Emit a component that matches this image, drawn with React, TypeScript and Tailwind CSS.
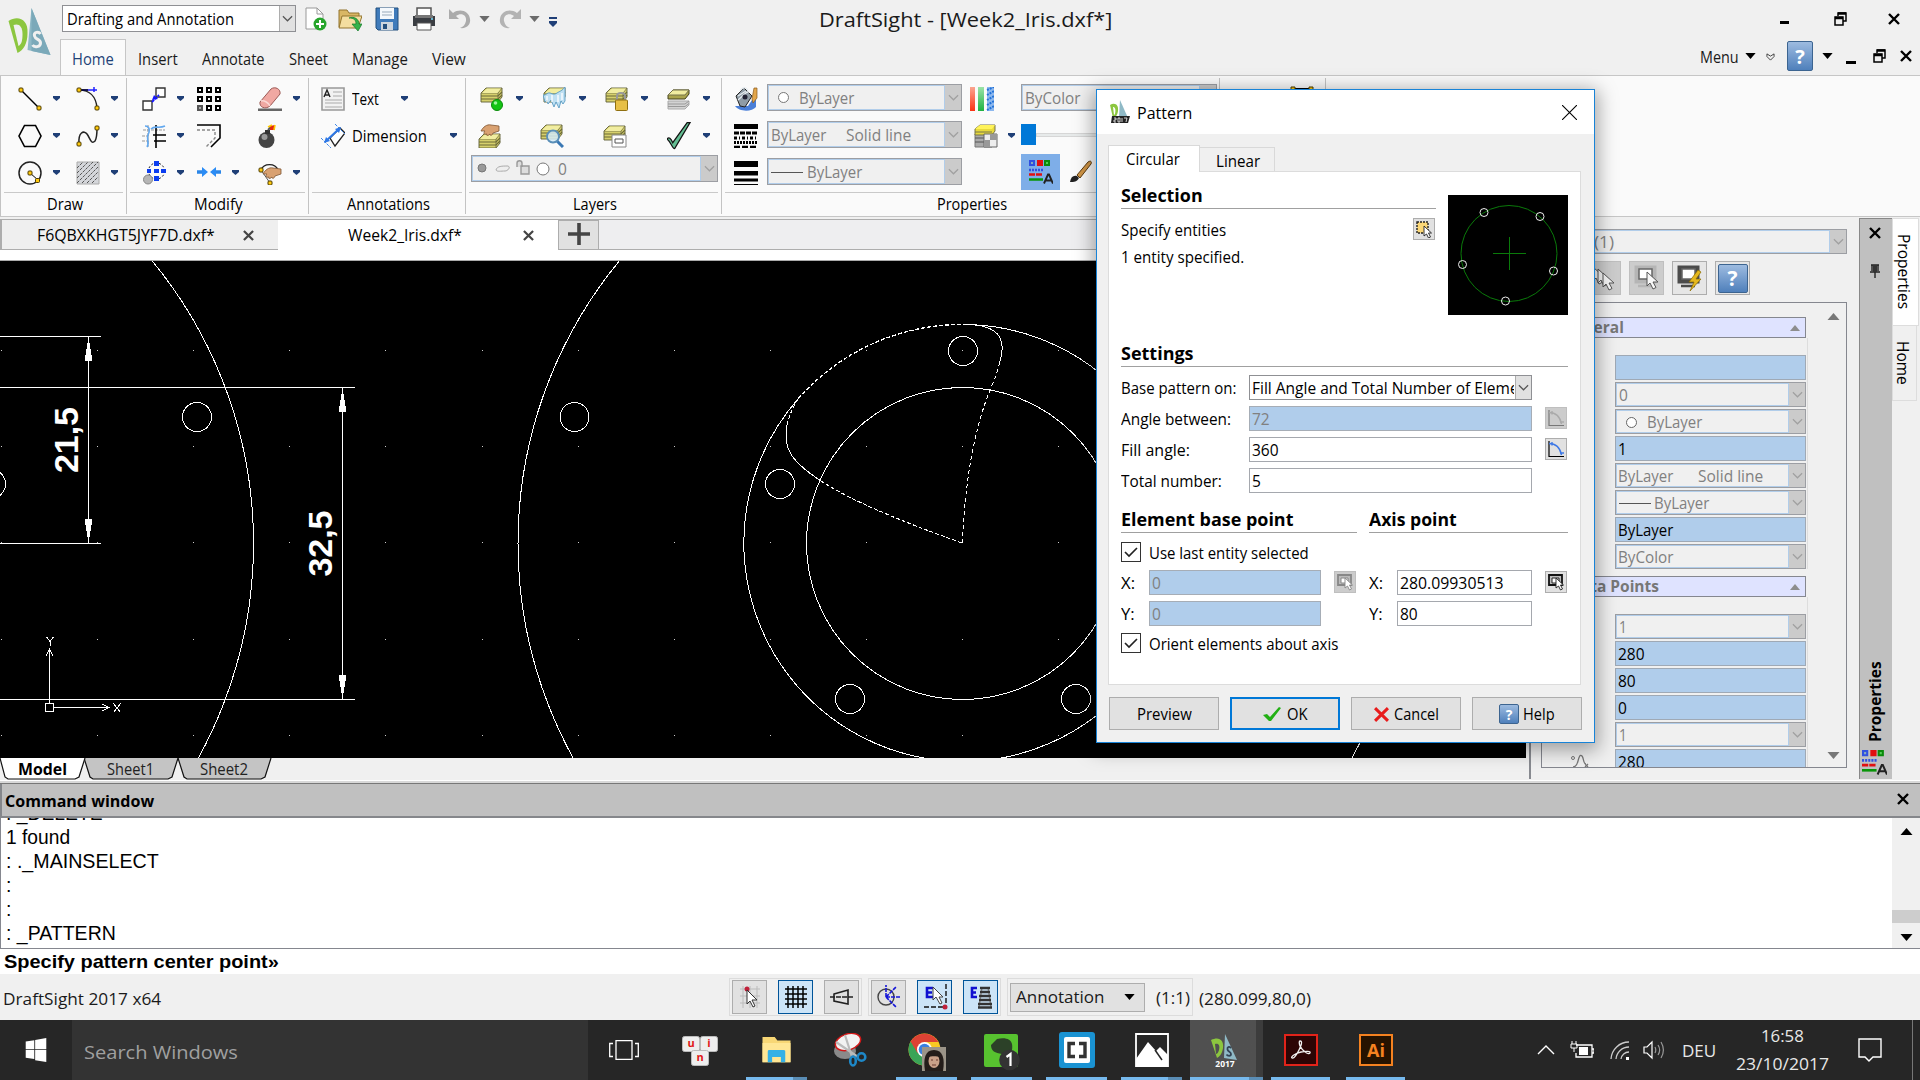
import React, { useLayoutEffect, useRef, useState } from "react";

type P = { children?: React.ReactNode; className?: string };

/* Text squeezed or stretched horizontally to fill the width of its box. */
function Fit({ children, className = "" }: P) {
  const box = useRef<HTMLSpanElement>(null);
  const inner = useRef<HTMLSpanElement>(null);
  const [scale, setScale] = useState(1);
  useLayoutEffect(() => {
    if (box.current && inner.current) setScale(box.current.offsetWidth / inner.current.offsetWidth);
  }, []);
  return (
    <span ref={box} className={"block shrink-0 whitespace-pre text-left " + className}>
      <span ref={inner} className="inline-block origin-left" style={{ transform: `scaleX(${scale})` }}>
        {children}
      </span>
    </span>
  );
}

function Ic({ children, className = "w-6 h-6", box = "0 0 24 24" }: P & { box?: string }) {
  return (
    <svg viewBox={box} className={"shrink-0 " + className} fill="none">
      {children}
    </svg>
  );
}

const Arrow = ({ className = "" }: P) => (
  <Ic box="0 0 7 5" className={"w-[7px] h-[5px] " + className}>
    <path d="M0 0h7v2L3.5 5 0 2z" fill="#1f3f77" />
  </Ic>
);
const Tri = ({ className = "w-[11px] h-[6px]" }: P) => (
  <Ic box="0 0 12 7" className={className}>
    <path d="M0 0h12L6 7z" fill="currentColor" />
  </Ic>
);
const Chev = () => (
  <Ic box="0 0 12 7" className="w-[11px] h-[7px]">
    <path d="M1 1l5 5 5-5" stroke="currentColor" strokeWidth="1.3" />
  </Ic>
);
const X = ({ className = "" }: P) => (
  <Ic box="0 0 12 12" className={"w-3 h-3 " + className}>
    <path d="M1 1l10 10M11 1L1 11" stroke="currentColor" strokeWidth="2.4" />
  </Ic>
);
const Dot = ({ x, y }: { x: number; y: number }) => (
  <rect x={x - 2} y={y - 2} width="4" height="4" rx="1" fill="#ffc90e" stroke="#4a3a00" />
);

function Combo({ children, className = "", on = false }: P & { on?: boolean }) {
  return (
    <div className={"flex shrink-0 border " + (on ? "border-[#8f9094] bg-white text-black " : "border-[#9c9ea3] bg-[#f0f0f0] text-[#808080] ") + className}>
      <div className={"flex min-w-0 flex-1 items-center overflow-hidden border pt-[2px] " + (on ? "border-transparent" : "border-[#b1cdea]")}>{children}</div>
      <div className={"flex w-[16px] shrink-0 items-center justify-center " + (on ? "border-l border-[#adadad] bg-[#e1e1e1] text-[#555]" : "bg-[#cbcbcb] text-[#a0a0a0]")}>
        <Chev />
      </div>
    </div>
  );
}

const HelpIcon = ({ className = "" }: P) => (
  <span className={"flex shrink-0 items-center justify-center rounded-[2px] border border-[#3c6490] bg-linear-to-b from-[#9dbbe0] to-[#4f80bb] font-bold text-white " + className}>?</span>
);

/* ---------- ribbon drawings ---------- */
const Stack = ({ y = 0, c = "#d6d06c" }: { y?: number; c?: string }) => (
  <g transform={`translate(0 ${y})`}>
    <path d="M1 5l5-5h16v9l-4 5H1z" fill={c} stroke="#5f5d35" strokeWidth=".9" />
    <path d="M1 5h17v9M18 5l4-5" stroke="#77744a" strokeWidth=".9" />
    <path d="M1 8h17l4-4M1 11h17l4-4" stroke="#6b6936" strokeWidth="1.1" />
    <path d="M2 5l5-4.500h14L17.500 5z" fill="#f1eda0" />
  </g>
);
const Hand = ({ x = 0, y = 0 }) => (
  <path transform={`translate(${x} ${y})`} d="M0 8c2-4 6-7 10-6l8 1v5l-6 2c-1 3-3 3-3 1-2 2-4 2-3 0-3 1-4-1-2-3z" fill="#d9a171" stroke="#7d5634" strokeWidth=".8" />
);
const ic = {
  line: <Ic><path d="M3 3l18 18" stroke="#000" strokeWidth="1.4" /><Dot x={3} y={3} /><Dot x={21} y={21} /></Ic>,
  arc: <Ic><path d="M3 3c10 0 17 6 18 18" stroke="#222" strokeWidth="1.4" /><path d="M3 3h18M18 0v5" stroke="#2020ff" strokeWidth="1.5" /><path d="M3 3h9" stroke="#000" strokeWidth="1.4" /><Dot x={3} y={3} /><Dot x={21} y={21} /></Ic>,
  hex: <Ic><path d="M6.500 1.500h11L23 12l-5.500 10.500h-11L1 12z" stroke="#000" strokeWidth="1.6" /></Ic>,
  spline: <Ic><path d="M3 20C2 8 8 6 11 10s4 11 8 7c2-3 2-8 2-13" stroke="#222" strokeWidth="1.5" /><Dot x={3} y={20} /><Dot x={21} y={4} /></Ic>,
  circle: <Ic><circle cx="12" cy="12" r="11" stroke="#222" strokeWidth="1.5" /><path d="M12 12l8 7" stroke="#000" /><Dot x={12} y={12} /><Dot x={19.500} y={19.500} /></Ic>,
  hatch: <Ic><path d="M1 1h22v22H1z" fill="#d4d6da" stroke="#aaa" /><path d="M1 7l6-6M1 12L12 1M1 17L17 1M1 22L22 1M6 22L22 6M11 22l11-11M16 22l6-6" stroke="#555" strokeDasharray="3 1" /></Ic>,
  copy: <Ic><path d="M14 1h9v9h-9z M1 14h9v9H1z" stroke="#333" strokeWidth="1.4" fill="#fff" /><path d="M10 15l7-7" stroke="#1515ff" strokeWidth="1.800" strokeDasharray="3 1" /><path d="M10 13l2-5 4 4z" fill="#1515ff" /></Ic>,
  grid: <Ic>{[1, 10, 19].map((y) => [1, 10, 19].map((x) => <rect key={x + "-" + y} x={x} y={y} width="4" height="4" stroke={x === 1 && y === 19 ? "#555" : "#000"} strokeWidth="2" fill={x === 1 && y === 19 ? "#aaa" : "#fff"} />))}</Ic>,
  eraser: <Ic><path d="M0 21.500h24v2.500H0z" fill="#666" /><path d="M2 15L13 2c4-3 10 0 9 5L12 19c-5 4-11 1-10-4z" fill="#f0a8a2" stroke="#9b5a56" /><path d="M3 14c3-1 8 2 9 5" stroke="#fbd8d4" strokeWidth="1.500" /></Ic>,
  trim: <Ic><path d="M1 6h22M0 12h8M0 17h8M6 1v22" stroke="#999" strokeDasharray="3 1" /><path d="M14 1v23M11 11h13M12 17h12" stroke="#000" strokeWidth="1.6" /><path d="M3 2c5 0 5 5 3 9s2 8-1 12M9 5c4-4 7 0 14-3" stroke="#62a8ef" strokeWidth="1.6" /></Ic>,
  offset: <Ic><path d="M0 1h23v13l-9 9" stroke="#000" strokeWidth="1.6" /><path d="M0 6h18v8l-9 9" stroke="#888" strokeWidth="1.4" strokeDasharray="3 2" /></Ic>,
  bomb: <Ic><circle cx="8.500" cy="16" r="8" fill="#444" /><circle cx="6.500" cy="13" r="3" fill="#999" /><path d="M7 6h5v4H7z" fill="#333" /><path d="M10 6l3-3" stroke="#555" strokeWidth="2" /><path d="M12 2l5-1v5h-5z" fill="#e02a10" /><path d="M10 3l4-2M16 6l1-5" stroke="#ffc800" strokeWidth="1.600" /></Ic>,
  polar: <Ic><circle cx="14.500" cy="10" r="8" stroke="#111" strokeDasharray="2 2" /><path d="M12 0h5v5h-5zM5 8h4v4H5zM12 8h5v4h-5zM19 8h5v4h-5zM12 15h5v5h-5z" fill="#0b3df0" /><circle cx="6" cy="18.500" r="4.500" fill="#b5b5b5" stroke="#888" /></Ic>,
  join: <Ic><path d="M0 11h6M24 11h-6" stroke="#2b86e8" strokeWidth="3.500" /><path d="M5 6l6 5-6 5zM19 6l-6 5 6 5z" fill="#2b8cf5" /></Ic>,
  edit: <Ic><path d="M3 9a9 8 0 0 1 17 0" stroke="#222" strokeWidth="1.4" /><path d="M3 9l9 13" stroke="#555" /><Hand x={5} y={5} /><Dot x={3} y={9} /><Dot x={12} y={22} /></Ic>,
  text: <Ic><path d="M1 1h22v22H1z" stroke="#999" strokeWidth="1.600" fill="#f2f2f2" /><path d="M3 10L6 3l3 7M4 8h4" stroke="#222" strokeWidth="1.4" /><path d="M12 5h9M12 9h9M4 13h17M4 16h17M4 20h17" stroke="#aaa" /></Ic>,
  dim: <Ic><path d="M9 14L19 4l5 5-10 13z" fill="#fff" stroke="#222" strokeWidth="1.300" /><path d="M0 14l10 10M14 0l10 10" stroke="#3f87e8" strokeDasharray="3 1" /><path d="M5 17L19 4" stroke="#2e78e6" strokeWidth="2" /><path d="M3 19l2-6 4 4zM20 3l-6 2 4 4z" fill="#2e78e6" /></Ic>,
  lOn: <Ic><Stack y={1} /><circle cx="17" cy="18" r="5.500" fill="#14c414" stroke="#0a8a0a" /><circle cx="15.500" cy="16" r="1.800" fill="#9cf59c" /></Ic>,
  lFreeze: <Ic><Stack y={1} /><path d="M0 8c3 1 4-3 7-2s4 2 7 0 5-2 8-6v14l-2 3-2-3-2 7-3-6-2 5-3-7-3 4-1-4-2 2z" fill="#bfe0f2" stroke="#5a9cc4" strokeWidth=".9" /><path d="M4 9v6M9 8v7M15 8v7M19 6v7" stroke="#fff" strokeWidth="1.300" /></Ic>,
  lLock: <Ic><Stack y={1} /><path d="M12 13V9c0-4 8-4 8 0v4" stroke="#999" strokeWidth="2" /><rect x="10.500" y="13" width="12" height="10.500" rx="1" fill="#e7bf45" stroke="#8f6f10" /></Ic>,
  lIso: <Ic><path d="M1 22v-8h21v4l-4 4z" fill="#d3d3d3" stroke="#aaa" /><path d="M1 17h17l4-3M1 19.500h17l4-3" stroke="#999" /><path d="M1 8l5-5h16v4l-4 5H1z" fill="#aaa44c" stroke="#44421e" /><path d="M1 8h17l4-5H6z" fill="#f1eda0" stroke="#77744a" /></Ic>,
  lHand: <Ic><Stack y={10} /><Hand x={3} y={-1} /></Ic>,
  lFind: <Ic><Stack y={1} /><path d="M17 17l6 6" stroke="#3a78b4" strokeWidth="3" /><circle cx="13" cy="12.500" r="6" fill="#d5ebf7" fillOpacity=".85" stroke="#5a8fb8" strokeWidth="1.800" /></Ic>,
  lState: <Ic><Stack y={2} /><path d="M9 11h14v12H9z" fill="#fff" stroke="#888" /><path d="M12 15h8v4h-8z" stroke="#555" /></Ic>,
  check: <Ic className="w-[24px] h-[30px]" box="1 0 25 30"><path d="M1 18c2-2 4-1 6 4L22 1h3L9 28c-2 1-4-7-8-10z" fill="#63bd92" stroke="#111" strokeWidth="1.300" /></Ic>,
  paint: <Ic><path d="M1 19c4 6 17 6 21 1V7l-8 12z" fill="#4a7fd8" /><path d="M2 9l8-8 8 8-7 11-5-1z" fill="#8f9ca6" stroke="#222" /><path d="M6 4c3-5 8-4 8 2M4 9l8-5M4 13l9-8" stroke="#e6ecf0" strokeWidth="1.300" /><circle cx="11" cy="10" r="2.500" fill="#223" /><path d="M20 1h3v10l-4 5-1-4z" fill="#e3a64a" stroke="#8a5a1a" strokeWidth=".7" /></Ic>,
  ltype: <Ic><path d="M0 0h24v5H0z" fill="#000" /><path d="M0 9h24" stroke="#000" strokeWidth="3" strokeDasharray="5 1" /><path d="M0 14h24" stroke="#000" strokeWidth="3" strokeDasharray="3 2 1 2" /><path d="M0 18.500h24" stroke="#000" strokeWidth="3" strokeDasharray="2 1" /><path d="M0 23h24" stroke="#000" strokeWidth="2.500" strokeDasharray="6 2" /></Ic>,
  lweight: <Ic><path d="M0 0h24v6H0zM0 10h24v4.500H0zM0 17.500h24v3H0zM0 23h24v1H0z" fill="#000" /></Ic>,
};

const Cell = ({ children, arrow = true, gap = "gap-[11px]" }: P & { arrow?: boolean; gap?: string }) => (
  <div className={"flex h-[37px] items-center " + gap}>{children}{arrow && <Arrow />}</div>
);

function Panel({ title, tw, className = "", children }: P & { title: string; tw: string }) {
  return (
    <div className={"flex shrink-0 flex-col pt-[4px] " + className}>
      <div className="h-[112px]">{children}</div>
      <div className="mx-[3px] flex h-[23px] justify-center border-t border-[#c9c9c9] pl-[2px]">
        <Fit className={"leading-[22px] " + tw}>{title}</Fit>
      </div>
    </div>
  );
}
const Sep = () => <div className="mt-[2px] h-[136px] w-px shrink-0 bg-[#c3c3c3]" />;

const StyleGlyph = ({ className = "w-6 h-6" }: P) => (
  <Ic className={className}>
    <path d="M1 1h4v4H1z" fill="#8ab" stroke="#3050e0" strokeWidth="2" /><path d="M8 0h6v6H8z" fill="#e01010" /><path d="M16 1h4v4h-4z" fill="#5c5" stroke="#0a8a0a" strokeWidth="2" />
    <path d="M0 10h14" stroke="#3050e0" strokeWidth="2.500" strokeDasharray="2 1" /><path d="M0 14.500h14" stroke="#e01010" strokeWidth="2.500" strokeDasharray="6 1" /><path d="M0 19.500h14" stroke="#089508" strokeWidth="2.500" />
    <path d="M15 23.500l4-9h1l4 9M16.500 20.500h6" stroke="#222" strokeWidth="1.900" />
  </Ic>
);

function TitleBar() {
  const tabs: [string, string][] = [["Insert", "w-[40px] ml-[12px]"], ["Annotate", "w-[63px] ml-[24px]"], ["Sheet", "w-[39px] ml-[24px]"], ["Manage", "w-[56px] ml-[24px]"], ["View", "w-[34px] ml-[24px]"]];
  return (
    <header className="flex h-[75px] shrink-0 bg-[#f0f0f0]">
      <Ic box="0 0 42 50" className="ml-[8px] mt-[8px] h-[50px] w-[43px]">
        <path d="M23 0l19 47-23-5z" fill="#8fb9c6" /><path d="M23 0v43l19 4z" fill="#7ba9b9" />
        <path d="M0 13c9-6 20-2 19 12 0 11-4 17-10 20z" fill="#8cc63f" /><path d="M5 17c5-2 9 1 9 9 0 7-1 10-4 12z" fill="#f0f0f0" />
        <path d="M32 26c-2-3-7-2-6 2s6 3 6 7-6 5-8 2" stroke="#f0f0f0" strokeWidth="3" />
      </Ic>
      <div className="flex w-[1640px] shrink-0 flex-col pl-[9px]">
        <div className="flex h-[40px] items-start pl-[2px]">
          <Combo on className="mt-[5px] h-[27px] w-[234px]"><Fit className="ml-[3px] w-[167px]">Drafting and Annotation</Fit></Combo>
          <div className="ml-[9px] mt-[7px] flex h-[24px] items-center text-[#6b6b6b]">
            <Ic box="0 0 22 24" className="h-[24px] w-[22px]"><path d="M1 1h11l6 6v15H1z" fill="#fff" stroke="#999" /><path d="M12 1v6h6" stroke="#999" /><circle cx="15" cy="17" r="6.500" fill="#27a52c" /><path d="M15 13v8M11 17h8" stroke="#fff" strokeWidth="2" /></Ic>
            <Ic className="ml-[11px] h-6 w-6"><path d="M1 3h8l2 3h10v14H1z" fill="#d9b765" stroke="#93752f" /><path d="M4 9h20l-4 12H1z" fill="#f4dea0" stroke="#93752f" /><path d="M11 11c5 0 7 2 7 6h-4l6 7 4-7h-3c0-5-5-8-10-6z" fill="#35b24a" stroke="#167a28" strokeWidth=".7" /></Ic>
            <Ic className="ml-[13px] h-6 w-6"><path d="M1 1h22v22H3l-2-2z" fill="#3f7bbb" stroke="#23507f" /><path d="M5 1h14v11H5z" fill="#f4f8fc" /><path d="M7 5h10M7 8h10" stroke="#9ab" /><path d="M6 15h12v8H6z" fill="#cdd6df" /><path d="M8 17h4v5H8z" fill="#234f7e" /></Ic>
            <Ic className="ml-[13px] h-6 w-6"><path d="M5 1h14v8H5z" fill="#fff" stroke="#555" strokeWidth="1.500" /><path d="M1 9h22v10H1z" fill="#3a3d42" /><path d="M3 8h18v3H3z" fill="#777" /><path d="M5 16h14v7H5z" fill="#fff" stroke="#555" /><circle cx="20" cy="12" r="1" fill="#7df" /></Ic>
            <Ic className="ml-[12px] h-6 w-6"><path d="M1 2v10h10L8 9c5-4 11-1 10 5-1 4-3 6-6 7 7 1 11-4 10-9C21 4 12 1 5 6z" fill="#ababab" /></Ic>
            <Tri className="ml-[7px] h-[6px] w-[11px]" />
            <Ic className="ml-[9px] h-6 w-6"><path d="M22 2v10H12l3-3C10 5 4 8 5 14c1 4 3 6 6 7C4 22 0 17 1 12 2 4 11 1 18 6z" fill="#b3b3b3" /></Ic>
            <Tri className="ml-[6px] h-[6px] w-[11px]" />
            <Ic box="0 0 8 10" className="ml-[9px] mt-[5px] h-[10px] w-[8px]"><path d="M0 0h8v2H0zM0 4h8v2L4 10 0 6z" fill="#1f3f77" /></Ic>
          </div>
          <Fit className="ml-[262px] mt-[5px] w-[294px] text-[20px] leading-[30px] text-[#1a1a1a]">DraftSight - [Week2_Iris.dxf*]</Fit>
        </div>
        <div className="flex h-[36px] text-[#1a1a1a]">
          <div className="relative z-10 flex h-[36px] w-[66px] justify-center border border-b-0 border-[#c6c6c6] bg-[#fafafa]"><Fit className="w-[42px] leading-[38px] text-[#1f4277]">Home</Fit></div>
          {tabs.map(([t, c]) => <Fit key={t} className={"leading-[40px] " + c}>{t}</Fit>)}
          <Fit className="ml-auto mr-[-48px] w-[39px] leading-[37px]">Menu</Fit>
        </div>
      </div>
      <div className="flex flex-1 flex-col text-black">
        <div className="flex h-[38px] justify-end pr-[20px]">
          <div className="mt-[21px] h-[3px] w-[9px] bg-black" />
          <Restore className="ml-[45px] mt-[12px]" />
          <X className="ml-[41px] mt-[13px]" />
        </div>
        <div className="flex h-[37px] items-center justify-end pr-[8px] pb-[1px]">
          <Tri />
          <Ic box="0 0 10 9" className="ml-[10px] mt-[2px] h-[8px] w-[9px]"><path d="M1 4V1l4 2.500L9 1v3L5 8z" stroke="#333" /></Ic>
          <HelpIcon className="ml-[12px] h-[30px] w-[26px] text-[20px]" />
          <Tri className="ml-[9px] h-[6px] w-[11px]" />
          <div className="ml-[13px] mt-[13px] h-[3px] w-[10px] bg-black" />
          <Restore className="ml-[17px]" />
          <X className="ml-[14px]" />
        </div>
      </div>
    </header>
  );
}
const Restore = ({ className = "" }: P) => (
  <Ic box="0 0 13 14" className={"h-[14px] w-[13px] " + className}><path d="M4 4V1h8v8H9" stroke="#000" strokeWidth="1.500" /><path d="M4 1.500h8M1 6h8" stroke="#000" strokeWidth="2.500" /><path d="M1 5h8v8H1z" stroke="#000" strokeWidth="1.500" /></Ic>
);

function Ribbon() {
  return (
    <div className="flex h-[142px] shrink-0 border-y border-[#c6c6c6] bg-[#fafafa]">
      <Panel title="Draw" tw="w-[36px]" className="w-[126px] border-l border-[#c3c3c3]">
        <div className="grid grid-cols-[58px_auto] pl-[17px]">
          {[ic.line, ic.arc, ic.hex, ic.spline, ic.circle, ic.hatch].map((e, i) => <Cell key={i}>{e}</Cell>)}
        </div>
      </Panel>
      <Sep />
      <Panel title="Modify" tw="w-[49px]" className="w-[181px]">
        <div className="grid grid-cols-[55px_61px_auto] pl-[15px]">
          {[ic.copy, ic.grid, ic.eraser, ic.trim, ic.offset, ic.bomb, ic.polar, ic.join, ic.edit].map((e, i) => <Cell key={i} arrow={![1, 4, 5].includes(i)}>{e}</Cell>)}
        </div>
      </Panel>
      <Sep />
      <Panel title="Annotations" tw="w-[83px]" className="w-[156px]">
        <div className="flex flex-col pl-[12px]">
          <Cell gap="gap-0">{ic.text}<Fit className="ml-[7px] mr-[22px] mt-[2px] w-[27px]">Text</Fit></Cell>
          <Cell gap="gap-0">{ic.dim}<Fit className="ml-[7px] mr-[23px] mt-[2px] w-[75px]">Dimension</Fit></Cell>
        </div>
      </Panel>
      <Sep />
      <Panel title="Layers" tw="w-[44px]" className="w-[255px]">
        <div className="grid grid-cols-[63px_62px_62px_auto] pl-[14px]">
          {[ic.lOn, ic.lFreeze, ic.lLock, ic.lIso].map((e, i) => <Cell key={i} gap="gap-[12px]">{e}</Cell>)}
        </div>
        <div className="grid grid-cols-[62px_63px_64px_auto] pl-[12px]">
          {[ic.lHand, ic.lFind, ic.lState, ic.check].map((e, i) => <Cell key={i} arrow={i === 3} gap="gap-[12px]">{e}</Cell>)}
        </div>
        <Combo className="ml-[5px] mt-px h-[27px] w-[247px]">
          <Ic box="0 0 100 24" className="-mt-[2px] h-6 w-[100px]">
            <circle cx="9" cy="11" r="4" fill="#999" stroke="#777" /><path d="M23 13c1-4 6-4 12-4 3 1 0 5-3 5-4 0-8 1-9-1z" stroke="#aaa" fill="#eee" />
            <path d="M44 10V6c0-3 5-3 5 0v4M48 9h8v8h-8z" stroke="#999" strokeWidth="1.400" fill="#ddd" /><circle cx="70" cy="12" r="6" fill="#fff" stroke="#777" />
          </Ic>
          <Fit className="ml-[-15px] w-[9px]">0</Fit>
        </Combo>
      </Panel>
      <Sep />
      <Panel title="Properties" tw="w-[70px]" className="w-[497px]">
        <div className="flex">
          <div className="ml-[12px] flex w-[33px] flex-col">
            <Cell arrow={false}>{ic.paint}</Cell><Cell arrow={false}>{ic.ltype}</Cell><Cell arrow={false}>{ic.lweight}</Cell>
          </div>
          <div className="flex w-[203px] flex-col gap-[10px] pt-[4px]">
            <Combo className="h-[27px] w-[195px]"><span className="-mt-[3px] ml-[9px] mr-[10px] h-[11px] w-[11px] rounded-full border border-[#777] bg-white" /><Fit className="w-[55px]">ByLayer</Fit></Combo>
            <Combo className="h-[27px] w-[195px]"><Fit className="ml-[2px] w-[55px]">ByLayer</Fit><Fit className="ml-[20px] w-[65px]">Solid line</Fit></Combo>
            <Combo className="h-[27px] w-[195px]"><span className="ml-[2px] mr-[4px] h-px w-[32px] bg-[#555]" /><Fit className="w-[55px]">ByLayer</Fit></Combo>
          </div>
          <div className="flex w-[51px] flex-col">
            <Cell arrow={false}><Ic><path d="M0 0h5v24H0z" fill="url(#cr)" /><path d="M8 0h6v24H8z" fill="url(#cg)" /><path d="M17 0h7v24h-7z" fill="#8db8ee" /><path d="M17 3l7-3M17 8l7-4M17 13l7-4M17 18l7-4M17 23l7-4" stroke="#2272d8" strokeWidth="2" strokeDasharray="2 1" />
              <defs><linearGradient id="cr" x2="0" y2="1"><stop stopColor="#fba590" /><stop offset="1" stopColor="#fa3214" /></linearGradient><linearGradient id="cg" x2="0" y2="1"><stop stopColor="#9be3a8" /><stop offset="1" stopColor="#1fb242" /></linearGradient></defs></Ic></Cell>
            <Cell gap="gap-[10px]"><Ic className="ml-[4px] h-6 w-6"><path d="M1 10h17v13H1z" fill="#aaa" stroke="#777" /><path d="M1 14h10M1 18h10" stroke="#555" /><path d="M1 5l5-4h15v6l-3 4H1z" fill="#e8da3c" stroke="#77744a" /><path d="M1 5h17l3-4H6z" fill="#fff35a" /><path d="M1 8h17" stroke="#77744a" /><path d="M10 10h13v13H10z" fill="#eee" stroke="#666" /><path d="M16 10h7v6h-7zM10 16h6v7h-6z" fill="#999" /></Ic></Cell>
          </div>
          <div className="flex flex-col">
            <Combo className="mt-[4px] h-[27px] w-[196px]"><Fit className="ml-[2px] w-[55px]">ByColor</Fit></Combo>
            <div className="mt-[13px] flex h-[21px] items-center"><span className="h-[21px] w-[15px] bg-[#0078d7]" /><span className="h-[4px] w-[180px] border border-[#d6d6d6] bg-[#e7eaea]" /></div>
            <div className="mt-[9px] flex h-[36px] items-center gap-[10px]"><span className="flex h-[36px] w-[39px] items-center justify-center bg-[#7eaee8]"><StyleGlyph /></span>
              <Ic box="0 0 22 24" className="h-6 w-[22px]"><path d="M0 22c1-5 3-7 7-6l2 2c-2 4-5 4-9 4z" fill="#222" /><path d="M7 15L18 2c3-2 4 0 3 2L10 18z" fill="#cf9445" stroke="#5a3a10" /></Ic></div>
          </div>
        </div>
      </Panel>
      <Sep />
      <div className="flex w-[105px] flex-col pt-[10px]">
        <Ic box="0 0 24 4" className="ml-[70px] h-[4px] w-[24px]"><path d="M2 3h20" stroke="#000" strokeWidth="2" /><path d="M1 1h4v3H1zM19 1h4v3h-4z" fill="#ffc90e" stroke="#4a3a00" /></Ic>
      </div>
      <Sep />
    </div>
  );
}

function DocTabs() {
  return (
    <div className="flex h-[31px] w-[1526px] shrink-0 border-t border-[#adadad] bg-[#eeeef0] text-black">
      <div className="flex w-[278px] items-center border-b border-l-2 border-[#adadad] bg-[#efefef] pt-[2px]">
        <Fit className="ml-[35px] w-[178px]">F6QBXKHGT5JYF7D.dxf*</Fit><X className="ml-[28px] h-[11px] w-[11px] text-[#444]" />
      </div>
      <div className="flex w-[280px] items-center bg-white"><Fit className="ml-[70px] w-[114px]">Week2_Iris.dxf*</Fit><X className="ml-[61px] h-[11px] w-[11px] text-[#444]" /></div>
      <div className="flex w-[41px] items-center justify-center border border-[#adadad] bg-[#e1e1e1]"><Ic className="-mt-[2px] h-6 w-6"><path d="M12 1v22M1 12h22" stroke="#444" strokeWidth="3.600" /></Ic></div>
      <div className="flex-1 border-b border-[#adadad]" />
    </div>
  );
}

/* ---------- drawing area ---------- */
const gridXs = Array.from({ length: 16 }, (_, i) => Math.floor(1.5 + i * 96.1));
const gridYs = [350, 446, 542, 639, 735];
const holes = [[197, 417], [-9, 484], [574.5, 417], [963, 351], [780, 484], [850, 699], [1076, 699]];

function Drawing() {
  return (
    <svg viewBox="0 261 1526 497" className="h-[497px] w-[1526px] shrink-0 bg-black" fill="none" stroke="#fff" shapeRendering="crispEdges">
      {gridYs.map((y) => gridXs.map((x) => <rect key={x + "-" + y} x={x} y={y} width="1" height="1" fill="#ccc" stroke="none" />))}
      <circle cx="-191" cy="543.5" r="444.500" /><circle cx="962.5" cy="543.5" r="444.500" />
      <circle cx="962.5" cy="543.5" r="156" />
      <path d="M967 324.500A218.500 218.500 0 1 1 798 399" />
      <path d="M967 324.500A218.500 218.500 0 0 0 798 399" strokeDasharray="4 2" strokeWidth="1.300" />
      {holes.map(([x, y]) => <circle key={x} cx={x} cy={y} r="14.500" />)}
      <path d="M962.500 543.500Q966 450 990 390Q997 374 999.500 363" strokeDasharray="4 3" />
      <path d="M999.500 363C1006 343 1003 325 967 324.500M787 425C783 447 789 460 821 481" />
      <path d="M798 399Q790 412 787 425M821 481C850 500 900 521 962 543" strokeDasharray="4 2" />
      <path d="M0 336.500h101M0 543.500h101M88.500 337v206M0 387.500h355M0 699.500h355M342.500 388v311" />
      <path d="M88.500 337l4 24h-8zM88.500 543l4-24h-8zM342.500 388l4 24h-8zM342.500 699l4-24h-8z" fill="#fff" stroke="none" />
      <path d="M45.500 703.500h8v8h-8zM49.500 703v-55M46 656l3.500-7 3.500 7M54 707.500h55M102 704l7 3.500-7 3.500" />
      <path d="M46.500 637l3.500 4.500 3.500-4.500M50 641v5M113.500 703.500l7 9M120.500 703.500l-7 9" />
      <g fill="#fff" stroke="none" className="font-['Liberation_Sans',sans-serif] text-[34px] font-bold">
        <text transform="translate(77.500 473) rotate(-90)" textLength="66">21,5</text>
        <text transform="translate(331.500 576.500) rotate(-90)" textLength="66">32,5</text>
      </g>
    </svg>
  );
}

function SheetTabs() {
  return (
    <div className="flex h-[22px] w-[1526px] shrink-0 bg-[#f0f0f0]">
      <svg viewBox="0 0 272 22" className="h-[22px] w-[272px]" stroke="#111" strokeWidth="1.200">
        <path d="M178 0l6 19 3 2h74l4-2 6-19" fill="#c4c4c4" /><path d="M84 0l6 19 3 2h75l4-2 6-19" fill="#c4c4c4" /><path d="M0 0l5 19 3 2h67l4-2 6-19" fill="#fff" />
        <g fill="#000" stroke="none" className="text-[15.5px]">
          <text x="18" y="16.500" textLength="49" lengthAdjust="spacingAndGlyphs" fontWeight="bold">Model</text>
          <text x="107" y="16.500" textLength="47" lengthAdjust="spacingAndGlyphs" fill="#222">Sheet1</text>
          <text x="200" y="16.500" textLength="48" lengthAdjust="spacingAndGlyphs" fill="#222">Sheet2</text>
        </g>
      </svg>
    </div>
  );
}

/* ---------- properties palette ---------- */
const Blue = ({ children }: P) => <div className="h-[25px] w-[191px] shrink-0 border border-[#9fa9b5] bg-[#b0cdeb] pl-[2px] leading-[24px] text-black">{children}</div>;
const Drop = ({ children }: P) => <Combo className="h-[25px] w-[191px]">{children}</Combo>;
const ToolBtn = ({ children, on = false }: P & { on?: boolean }) => (
  <div className={"flex h-[34px] w-[35px] shrink-0 items-center justify-center border " + (on ? "border-[#adadad] bg-[#e6e6e6]" : "border-[#bfbfbf] bg-[#cccccc]")}>{children}</div>
);
const GroupHead = ({ children }: P) => (
  <div className="flex h-[21px] w-[252px] items-center justify-between border border-[#85878f] bg-[#dfe3ff] pl-[8px] pr-[5px] font-bold text-[#777]">
    {children}<Ic box="0 0 10 6" className="h-[6px] w-[10px]"><path d="M0 6l5-6 5 6z" fill="#8d8d8d" /></Ic>
  </div>
);
const Monitor = ({ c = "#8a8a8a" }: { c?: string }) => <><path d="M3 3h19v15H3z" fill={c} stroke={c} strokeWidth="3" /><path d="M6 5h13v10H6z" fill="#fff" stroke="#666" strokeWidth="1.500" /><path d="M5 22h14" stroke={c} strokeWidth="2.500" /></>;
const Cursor = ({ t = "" }) => <path transform={t} d="M0 0v14l3-3 3 6 3-1.500-3-5.500h5z" fill="#f7f7f7" stroke="#555" />;

function Palette() {
  return (
    <aside className="flex h-[562px] flex-1 pt-px">
      <div className="ml-[3px] w-[12px] border-l-2 border-[#888a90]" />
      <div className="flex w-[306px] flex-col pt-[11px]">
        <Combo className="h-[25px] w-[306px]"><Fit className="ml-[51px] w-[20px]">(1)</Fit></Combo>
        <div className="flex gap-[8px] pt-[7px] pl-[45px]">
          <ToolBtn><Ic className="h-7 w-7" box="0 0 28 28"><Cursor t="translate(3 3)" /><Cursor t="translate(8 5)" /><Cursor t="translate(13 9)" /></Ic></ToolBtn>
          <ToolBtn><Ic className="h-7 w-7" box="0 0 28 28"><Monitor c="#b5b5b5" /><Cursor t="translate(14 8)" /></Ic></ToolBtn>
          <ToolBtn on><Ic className="h-7 w-7" box="0 0 28 28"><Monitor c="#4b4b4b" /><path d="M22 6l-9 12h5l-4 9 11-12h-5l5-7z" fill="#e5b81e" stroke="#8a6a00" strokeWidth=".7" /></Ic></ToolBtn>
          <ToolBtn on><HelpIcon className="h-[29px] w-[30px] text-[21px]" /></ToolBtn>
        </div>
        <div className="mt-[7px] flex h-[466px] overflow-hidden border border-[#85878f]">
          <div className="flex w-[265px] shrink-0 flex-col pl-[12px] pt-[14px]">
            <GroupHead>General</GroupHead>
            <div className="flex flex-col items-end gap-[2px] border-r border-[#ddd] pt-[17px] -mr-px pr-px">
              <Blue />
              <Drop><Fit className="ml-[2px] w-[9px]">0</Fit></Drop>
              <Drop><span className="ml-[9px] mr-[10px] h-[11px] w-[11px] rounded-full border border-[#666] bg-white" /><Fit className="w-[55px]">ByLayer</Fit></Drop>
              <Blue>1</Blue>
              <Drop><Fit className="ml-[1px] w-[55px]">ByLayer</Fit><Fit className="ml-[25px] w-[65px]">Solid line</Fit></Drop>
              <Drop><span className="ml-[2px] mr-[3px] h-px w-[32px] bg-[#555]" /><Fit className="w-[55px]">ByLayer</Fit></Drop>
              <Blue><Fit className="w-[55px]">ByLayer</Fit></Blue>
              <Drop><Fit className="ml-[1px] w-[55px]">ByColor</Fit></Drop>
            </div>
            <div className="mt-[7px]"><GroupHead><span className="ml-auto mr-[131px]">Data Points</span></GroupHead></div>
            <div className="flex flex-col items-end gap-[2px] border-r border-[#ddd] pt-[17px] -mr-px pr-px">
              <Drop><Fit className="ml-[2px] w-[8px]">1</Fit></Drop>
              <Blue><Fit className="w-[27px]">280</Fit></Blue><Blue><Fit className="w-[18px]">80</Fit></Blue><Blue>0</Blue>
              <Drop><Fit className="ml-[2px] w-[8px]">1</Fit></Drop>
              <div className="flex gap-[26px]"><Ic box="0 0 18 14" className="mt-[4px] h-[14px] w-[18px]"><circle cx="2" cy="5" r="1.500" stroke="#777" /><path d="M2 14c3 0 4-2 5-6s2-7 4-5 1 8 4 8M14 11l3 3M17 11l-3 3" stroke="#777" strokeWidth="1.300" /></Ic><Blue><Fit className="w-[27px]">280</Fit></Blue></div>
            </div>
          </div>
          <div className="flex flex-1 flex-col items-center justify-between pb-[8px] pl-[13px] pt-[10px] text-[#777]"><Tri className="w-[13px] h-[7px] rotate-180" /><Tri className="w-[13px] h-[7px]" /></div>
        </div>
      </div>
      <div className="ml-[12px] flex w-[33px] flex-col items-center border-l border-t border-[#888] bg-[#c0c0c0] pr-[3px] pt-[8px]">
        <X className="h-[12px]" />
        <Ic box="0 0 10 14" className="mt-[25px] h-[14px] w-[10px]"><path d="M1 1h8M2 1v6M8 1v6M0 8h10M5 8v6" stroke="#222" strokeWidth="1.400" /><path d="M3 1h4v7H3z" fill="#333" /></Ic>
        <div className="mt-auto flex h-[86px] items-start [writing-mode:vertical-rl] rotate-180"><Fit className="w-auto text-[15.5px] font-bold leading-[20px] text-black">Properties</Fit></div>
        <StyleGlyph className="mb-[4px] mt-[8px] h-[25px] w-[25px]" />
      </div>
      <div className="flex w-[27px] flex-col text-black">
        <div className="h-[108px] w-[27px] border border-[#ddd] bg-white pr-[3px] pt-[15px] leading-[22px] [writing-mode:vertical-rl]">Properties</div>
        <div className="h-[75px] w-[25px] border border-t-0 border-[#ddd] pr-[3px] pt-[15px] leading-[20px] [writing-mode:vertical-rl]">Home</div>
      </div>
    </aside>
  );
}

/* ---------- pattern dialog ---------- */
const H = ({ children, w, className = "" }: P & { w: string }) => (
  <div className={"flex h-[24px] shrink-0 items-start border-b border-[#a0a0a0] " + className}><Fit className={"text-[17px] font-bold leading-[22px] " + w}>{children}</Fit></div>
);
const Field = ({ children, off = false, className = "", w = "w-[27px]" }: P & { off?: boolean; w?: string }) => (
  <div className={"flex h-[25px] shrink-0 items-center border pl-[2px] pt-[2px] " + (off ? "border-[#a6adb6] bg-[#b0cdeb] text-[#808080] " : "border-[#a5a8ae] bg-white text-black ") + className}><Fit className={w}>{children}</Fit></div>
);
const Mini = ({ children, off = false, className = "" }: P & { off?: boolean }) => (
  <div className={"flex h-[22px] w-[22px] shrink-0 items-center justify-center border " + (off ? "border-[#bfbfbf] bg-[#cccccc] " : "border-[#adadad] bg-[#e1e1e1] ") + className}>{children}</div>
);
const AngleIcon = ({ off = false }) => (
  <Ic box="0 0 18 18" className="h-[18px] w-[18px]"><path d="M2 1v15.500h15" stroke={off ? "#777" : "#000"} strokeWidth="1.200" /><path d="M2 3.500c7 0 11 4 12.500 11.500M5 2v3.500M13 13h4" stroke={off ? "#aaa" : "#3d78e6"} strokeWidth="1.400" /></Ic>
);
const PickIcon = ({ off = false }) => (
  <Ic box="0 0 18 18" className="h-[18px] w-[18px]"><path d="M2 2h13v10H2z" stroke={off ? "#888" : "#111"} strokeWidth="1.800" fill="#bbb" /><path d="M5 5h7v5H5z" fill="#fff" stroke={off ? "#888" : "#222"} /><path d="M9 5v10l2.500-2 2 4 2-1-2-4h3z" fill="#fff" stroke={off ? "#888" : "#222"} strokeWidth=".9" /></Ic>
);
const Check = ({ children, w }: P & { w: string }) => (
  <div className="flex h-[20px] items-center gap-[8px]"><span className="flex h-[20px] w-[20px] items-center justify-center border border-[#333] bg-white"><Ic box="0 0 14 11" className="h-[11px] w-[14px]"><path d="M1 5l4 4 8-8" stroke="#222" strokeWidth="1.700" /></Ic></span><Fit className={"mt-[2px] " + w}>{children}</Fit></div>
);
const Btn = ({ children, primary = false }: P & { primary?: boolean }) => (
  <div className={"flex h-[33px] w-[110px] shrink-0 items-center justify-center bg-[#e1e1e1] pt-px " + (primary ? "border-2 border-[#0078d7]" : "border border-[#adadad]")}>{children}</div>
);

function PatternDialog() {
  return (
    <div className="absolute left-[1096px] top-[89px] flex h-[654px] w-[499px] flex-col border border-[#1883d7] bg-[#f0f0f0] text-black shadow-[0_4px_18px_3px_rgba(0,0,0,0.35)]">
      <div className="flex h-[44px] shrink-0 items-center bg-white">
        <Ic box="0 0 20 24" className="ml-[13px] h-6 w-5"><path d="M10 0l8 18-9-1z" fill="#8fb9c6" /><path d="M0 5c5-3 9 0 8 6s-3 6-5 7z" fill="#8cc63f" /><path d="M3 7c2 0 3 2 2 7l-1 1z" fill="#fff" /><path d="M2 16h18l-2 7H1z" fill="#222" /><path d="M4 18h2v2H4v2h2M8 18h2v4H8zM12 18v4M14 18h3l-1 4" stroke="#fff" strokeWidth=".8" /></Ic>
        <Fit className="ml-[7px] mt-[2px] w-[55px] text-[16px]">Pattern</Fit>
        <Ic box="0 0 15 15" className="ml-auto mr-[17px] h-[15px] w-[15px]"><path d="M0 0l15 15M15 0L0 15" stroke="#000" strokeWidth="1.100" /></Ic>
      </div>
      <div className="flex h-[37px] shrink-0 items-end pl-[11px]">
        <div className="relative z-10 flex h-[27px] w-[92px] -mb-px justify-center border border-b-0 border-[#d9d9d9] bg-white pr-[2px]"><Fit className="w-[54px] leading-[26px]">Circular</Fit></div>
        <div className="flex h-[24px] w-[75px] justify-center border border-b-0 border-l-0 border-[#d9d9d9] pl-px"><Fit className="w-[44px] leading-[26px]">Linear</Fit></div>
      </div>
      <div className="ml-[11px] flex h-[514px] w-[473px] shrink-0 flex-col border border-[#dcdcdc] bg-white pl-[12px] pr-[12px] pt-[13px]">
        <div className="flex h-[158px] shrink-0">
          <div className="w-[315px]">
            <H w="w-[82px]">Selection</H>
            <div className="flex items-start justify-between pt-[9px]"><Fit className="mt-[2px] w-[105px]">Specify entities</Fit>
              <Mini className="mr-px"><Ic box="0 0 18 18" className="h-[18px] w-[18px]"><path d="M2 2h11v11H2z" fill="#fbd777" stroke="#222" strokeWidth="1.400" strokeDasharray="2 1" /><path d="M9 6v10l2.500-2 2 4 2-1-2-4h3z" fill="#fff" stroke="#222" strokeWidth=".9" /></Ic></Mini></div>
            <Fit className="mt-[6px] w-[123px]">1 entity specified.</Fit>
          </div>
          <svg viewBox="0 0 120 120" className="ml-[12px] mt-[10px] h-[120px] w-[120px] bg-black" fill="none">
            <circle cx="61" cy="58.500" r="48" stroke="#0a7a0a" /><path d="M61.500 42v33M45 58.500h33" stroke="#0a7a0a" />
            {[[36, 17.500], [92, 21.500], [14.500, 69.500], [105.500, 76], [57.500, 106]].map(([x, y]) => <circle key={x} cx={x} cy={y} r="4" stroke="#eee" />)}
          </svg>
        </div>
        <H w="w-[73px]">Settings</H>
        <div className="mt-[8px] grid auto-rows-[25px] grid-cols-[128px_283px_auto] gap-y-[6px]">
          <Fit className="w-[115px] leading-[27px]">Base pattern on:</Fit>
          <Combo on className="h-[25px] w-[283px]"><Fit className="ml-[1px] w-[289px]">Fill Angle and Total Number of Elements</Fit></Combo><span />
          <Fit className="w-[110px] leading-[27px]">Angle between:</Fit><Field off w="w-[18px]">72</Field><Mini off className="ml-[13px] mt-px"><AngleIcon off /></Mini>
          <Fit className="w-[69px] leading-[27px]">Fill angle:</Fit><Field>360</Field><Mini className="ml-[13px] mt-px"><AngleIcon /></Mini>
          <Fit className="w-[101px] leading-[27px]">Total number:</Fit><Field w="w-[9px]">5</Field>
        </div>
        <div className="mt-[16px] flex gap-[12px]"><H w="w-[172px]" className="w-[236px]">Element base point</H><H w="w-[88px]" className="w-[199px]">Axis point</H></div>
        <div className="mt-[9px]"><Check w="w-[160px]">Use last entity selected</Check></div>
        <div className="mt-[8px] flex h-[25px] shrink-0"><Fit className="w-[14px] leading-[27px]">X:</Fit><Field off w="w-[9px]" className="ml-[14px] w-[172px]">0</Field><Mini off className="ml-[13px] mt-px"><PickIcon off /></Mini>
          <Fit className="ml-[13px] w-[14px] leading-[27px]">X:</Fit><Field w="w-[104px]" className="ml-[14px] w-[135px]">280.09930513</Field><Mini className="ml-[13px] mt-px"><PickIcon /></Mini></div>
        <div className="mt-[6px] flex h-[25px] shrink-0"><Fit className="w-[14px] leading-[27px]">Y:</Fit><Field off w="w-[9px]" className="ml-[14px] w-[172px]">0</Field><Fit className="ml-[48px] w-[14px] leading-[27px]">Y:</Fit><Field w="w-[18px]" className="ml-[14px] w-[135px]">80</Field></div>
        <div className="mt-[7px]"><Check w="w-[189px]">Orient elements about axis</Check></div>
      </div>
      <div className="ml-[12px] mt-[12px] flex gap-[11px]">
        <Btn><Fit className="w-[55px]">Preview</Fit></Btn>
        <Btn primary><Ic box="0 0 18 15" className="mr-[6px] h-[15px] w-[18px]"><path d="M0 8l4-1 3 3L16 0l2 1L8 14H6z" fill="#22b014" /></Ic><Fit className="w-[21px]">OK</Fit></Btn>
        <Btn><Ic box="0 0 14 14" className="mr-[5px] h-[15px] w-[15px]"><path d="M1 1l12 12M13 1L1 13" stroke="#e81c1c" strokeWidth="2.800" /></Ic><Fit className="w-[45px]">Cancel</Fit></Btn>
        <Btn><HelpIcon className="mr-[4px] h-[20px] w-[20px] text-[14px]" /><Fit className="w-[32px]">Help</Fit></Btn>
      </div>
    </div>
  );
}

/* ---------- command window and status bar ---------- */
function CommandWindow() {
  return (
    <section className="flex shrink-0 flex-col text-black">
      <div className="h-[4px] border-y border-t-white border-b-[#777] bg-[#d8d8d8]" />
      <div className="flex h-[34px] items-center justify-between border-b-2 border-l-2 border-[#85878b] bg-[#c0c0c0] pl-[3px] pr-[11px]"><Fit className="mt-[3px] w-[149px] font-bold">Command window</Fit><X className="-mt-[2px]" /></div>
      <div className="flex h-[131px] border-b border-l border-[#85878f] bg-white">
        <div className="flex-1 overflow-hidden pl-[5px] font-['Liberation_Sans',sans-serif] text-[19.5px] leading-[24px]">
          <div className="-mt-[17px]">
            <Fit className="w-[97px]">: _DELETE</Fit><Fit className="w-[64px]">1 found</Fit><Fit className="w-[153px]">: ._MAINSELECT</Fit><div>:</div><div>:</div><Fit className="w-[110px]">: _PATTERN</Fit>
          </div>
        </div>
        <div className="flex w-[28px] flex-col items-center bg-[#f0f0f0] pb-[7px] pt-[10px]"><Tri className="rotate-180 w-[13px] h-[7px]" /><div className="mb-[11px] mt-auto h-[13px] w-full bg-[#cdcdcd]" /><Tri className="w-[13px] h-[7px]" /></div>
      </div>
      <div className="h-[25px] bg-white pl-[4px] font-['Liberation_Sans',sans-serif] text-[19px] font-bold leading-[25px]"><Fit className="w-[275px]">Specify pattern center point»</Fit></div>
    </section>
  );
}

const SBtn = ({ children, on = false }: P & { on?: boolean }) => (
  <div className={"flex h-[34px] w-[35px] items-center justify-center border " + (on ? "border-[#005499] bg-[#cce4f7]" : "border-[#adadad] bg-[#e1e1e1]")}>{children}</div>
);
const SGroup = ({ children, className = "" }: P) => <div className={"flex h-[38px] items-center border border-[#dcdcdc] px-[2px] " + className}>{children}</div>;

function StatusBar() {
  return (
    <div className="flex h-[46px] shrink-0 items-center bg-[#f0f0f0] pl-[3px] text-[#1a1a1a]">
      <Fit className="mt-[5px] w-[158px]">DraftSight 2017 x64</Fit>
      <SGroup className="ml-[568px] gap-[11px]">
        <SBtn><Ic><path d="M2 4h20M2 11h20M2 18h20M5 1v22M12 1v22M19 1v22" stroke="#bbb" /><circle cx="9" cy="4" r="2.500" fill="#c0203a" /><path d="M9 5v14l3-3 3 6 2-1-3-6h5z" fill="#fff" stroke="#333" /></Ic></SBtn>
        <SBtn on><Ic><path d="M1 4h22M1 9h22M1 14h22M1 19h22M4 1v22M9 1v22M14 1v22M19 1v22" stroke="#000" strokeWidth="1.500" /></Ic></SBtn>
        <SBtn><Ic><path d="M4 9l14-4v14L4 16z" stroke="#222" strokeWidth="1.600" /><path d="M0 12h24" stroke="#222" strokeWidth="1.300" strokeDasharray="5 1" /></Ic></SBtn>
      </SGroup>
      <SGroup className="ml-[6px] gap-[11px]">
        <SBtn><Ic><circle cx="9" cy="12" r="8" stroke="#444" strokeWidth="1.400" /><path d="M9 12h14M9 12l10-10M9 12l10 10M9 12V0" stroke="#1616d8" strokeWidth="1.600" strokeDasharray="4 1" /></Ic></SBtn>
        <SBtn on><Ic className="h-7 w-7" box="0 0 28 28"><path d="M12 5H6v9h6M6 9.500h5" stroke="#1010d0" strokeWidth="2.600" /><path d="M25 1v21M3 24h19" stroke="#111" strokeWidth="1.400" strokeDasharray="5 2" /><path d="M12 4v13l3-3 4 7 2-1-3-6h4z" fill="#fff" stroke="#444" /><circle cx="24" cy="24" r="2.500" fill="#c0203a" /></Ic></SBtn>
        <SBtn on><Ic className="h-7 w-7" box="0 0 28 28"><path d="M10 5H5v9h5M5 9.500h4" stroke="#1010d0" strokeWidth="2.600" /><path d="M15 4l-3 20M21 4l3 20" stroke="#888" strokeWidth="1.500" /><path d="M13 5h10M13 9h10M12 13h12M12 17h12M11 21h14M11 24.500h14" stroke="#333" strokeWidth="2.400" /></Ic></SBtn>
      </SGroup>
      <SGroup className="ml-[6px] w-[186px]">
        <div className="flex h-[29px] w-[137px] items-center border border-[#adadad] bg-[#e1e1e1] pl-[5px]"><Fit className="mt-px w-[89px]">Annotation</Fit><Tri className="ml-[19px] h-[6px] w-[11px] text-black" /></div>
        <Fit className="ml-[11px] mt-[2px] w-[34px]">(1:1)</Fit>
      </SGroup>
      <Fit className="ml-[6px] mt-[4px] w-[112px]">(280.099,80,0)</Fit>
    </div>
  );
}

/* ---------- taskbar ---------- */
const Task = ({ children, className = "", bar = true, split = false }: P & { bar?: boolean; split?: boolean }) => (
  <div className={"flex h-[60px] shrink-0 flex-col items-center justify-end " + className}>
    <div className="flex h-[57px] items-center justify-center pt-[3px]">{children}</div>
    <div className="flex h-[3px] w-full">{bar && <><span className="h-full flex-1 bg-[#76b9ed]" />{split && <span className="h-full w-[14px] bg-[#5a8db5]" />}</>}</div>
  </div>
);

function Taskbar() {
  return (
    <footer className="flex h-[60px] shrink-0 bg-[#262626] text-[#e8e8e8]">
      <div className="flex w-[72px] items-center justify-center"><Ic className="h-6 w-6" box="0 0 24 28"><path d="M0 4l10-1.500V13H0zM11 2.300L24 0v13H11zM0 14h10v10.500L0 23zM11 14h13v14l-13-2z" fill="#fff" /></Ic></div>
      <div className="flex w-[516px] items-center bg-[#333] pl-[12px] pt-[4px] text-[19px] text-[#a0a0a0]"><Fit className="w-[154px]">Search Windows</Fit></div>
      <Task bar={false} className="ml-[5px] w-[62px]"><Ic box="0 0 30 20" className="h-[20px] w-[30px]"><path d="M7 .700h16v18.600H7zM4 3.500H.700v13H4M26 3.500h3.300v13H26" stroke="#fff" strokeWidth="1.300" /></Ic></Task>
      <Task bar={false} className="ml-[14px] w-[62px]">
        <Ic box="0 0 36 30" className="mt-[2px] h-[30px] w-[36px]"><g fill="#eee" stroke="#bbb"><rect x=".5" y=".5" width="17" height="15" rx="2" /><rect x="18.500" y=".5" width="17" height="15" rx="2" /><rect x="9.500" y="14.500" width="17" height="15" rx="2" /></g>
          <g fill="#e01818" fontSize="11" fontWeight="bold" textAnchor="middle"><text x="9" y="10.500">u</text><text x="27" y="10.500">i</text><text x="18" y="24.500">n</text></g></Ic>
      </Task>
      <Task split className="ml-[15px] w-[61px]"><Ic box="0 0 34 32" className="h-[28px] w-[33px]"><path d="M1 1h14l3 4h15v25H1z" fill="#f8d775" /><path d="M1 8h32v22H1z" fill="#ffe694" /><path d="M7 30V18c0-2 1-2 2-2h16c2 0 2 1 2 2v12h-5v-6H12v6z" fill="#35b1e6" /></Ic></Task>
      <Task bar={false} className="ml-[12px] w-[61px]"><Ic box="0 0 34 34" className="h-[34px] w-[34px]"><ellipse cx="12" cy="18" rx="11" ry="8" fill="#8a8a8a" /><ellipse cx="15" cy="9" rx="13" ry="8" transform="rotate(-18 15 9)" fill="#f2f2f2" stroke="#d01818" strokeWidth="1.500" /><path d="M3 9l22 15M12 2l7 22" stroke="#bbb" strokeWidth="2.200" /><circle cx="28.500" cy="24" r="3.800" stroke="#1e88c8" strokeWidth="2.600" /><ellipse cx="20" cy="28" rx="2.800" ry="4.500" stroke="#1e88c8" strokeWidth="2.600" /></Ic></Task>
      <Task className="ml-[16px] w-[61px]">
        <Ic box="0 0 38 38" className="mt-[4px] h-[38px] w-[38px]"><circle cx="16.500" cy="16.500" r="16" fill="#f9c922" /><path d="M2.600 8.500A16 16 0 0 0 14 32.300l7-11.500-4.500-4.300z" fill="#3aa457" /><path d="M2.600 8.500L9.500 20l7-11H30.400A16 16 0 0 0 2.600 8.500z" fill="#dd4234" /><circle cx="16.500" cy="16.500" r="7.500" fill="#fff" /><circle cx="16.500" cy="16.500" r="5.800" fill="#3b80e0" />
          <path d="M14 14h24v24H14z" fill="#9b9488" /><path d="M17 38c-2-12 0-21 9-21s11 9 9 21z" fill="#241d1a" /><ellipse cx="26" cy="28" rx="5.500" ry="7" fill="#c9a088" /><path d="M20 24c2-5 9-5 12 0-3-1-9-1-12 0z" fill="#241d1a" /><path d="M23 27h2M28 27h2M24 32h4" stroke="#6a3a30" /></Ic>
      </Task>
      <Task className="ml-[14px] w-[61px]">
        <Ic box="0 0 36 38" className="mt-[4px] h-[38px] w-[36px]"><rect y="1" width="34" height="33" rx="2" fill="#57c22f" /><path d="M7 12l6-6c8-2 14 0 15 5s-1 13-4 14c-4 0-4-4-6-4-7-1-11-3-11-9z" fill="#2c4128" /><circle cx="25.500" cy="27" r="10.300" fill="#333" /><path d="M22.500 24l4-3v12" stroke="#fff" strokeWidth="2.200" /></Ic>
      </Task>
      <Task className="ml-[14px] w-[61px]"><Ic box="0 0 36 36" className="h-[36px] w-[36px]"><rect width="36" height="36" rx="3" fill="#1a93d3" /><rect x="5" y="5" width="26" height="26" rx="2" fill="#fff" /><path d="M16 11.500h-6v13h6M20 11.500h6v13h-6" stroke="#333" strokeWidth="3.400" /></Ic></Task>
      <Task split className="ml-[14px] w-[61px]"><Ic box="0 0 34 34" className="h-[34px] w-[34px]"><path d="M1 1h32v32H1z" stroke="#fff" strokeWidth="1.800" /><path d="M1 26l12-17 8 9 4-4 8 8v11H1z" fill="#fff" /><path d="M20 17l7 10" stroke="#262626" strokeWidth="1.500" /></Ic></Task>
      <Task className="ml-[8px] w-[73px] bg-linear-to-r from-[#505050] from-90% to-[#3c3c3c] to-91%" split>
        <Ic box="0 0 28 36" className="mr-[3px] mt-[2px] h-[36px] w-[28px]"><path d="M14 1l12 26-13-2z" fill="#8fb9c6" /><path d="M0 7c8-4 13 0 12 8-1 6-3 8-6 10z" fill="#8cc63f" /><path d="M4 11c4-1 5 2 4 6-1 3-1 3-3 4z" fill="#505050" /><path d="M20 15c-2-2-4-1-3.500 1.500s3.500 2 3.500 4.500-3.500 2-4.500.5" stroke="#345" strokeWidth="1.800" /><text x="14" y="34" fill="#fff" fontSize="8.500" fontWeight="bold" textAnchor="middle">2017</text></Ic>
      </Task>
      <Task className="ml-[8px] w-[61px] pr-[2px]"><Ic box="0 0 34 32" className="h-[32px] w-[34px]"><rect x="1" y="1" width="32" height="30" fill="#2c0505" stroke="#e2231a" strokeWidth="2" /><path d="M16 7c3 0 1 5-1 9s-5 9-7 8 4-5 9-6 10-1 9 1-7-1-10-7c-1-3-1-5 0-5z" stroke="#f2f2f2" strokeWidth="1.300" /></Ic></Task>
      <Task className="ml-[14px] w-[61px] pr-[2px]"><Ic box="0 0 34 32" className="h-[32px] w-[34px]"><rect x="1" y="1" width="32" height="30" fill="#261300" stroke="#f58220" strokeWidth="2" /><text x="17" y="22.500" fill="#f58220" fontSize="18" fontWeight="bold" textAnchor="middle">Ai</text></Ic></Task>
      <div className="ml-auto flex items-center">
        <Ic box="0 0 18 10" className="h-[10px] w-[18px]"><path d="M1 9l8-8 8 8" stroke="#fff" strokeWidth="1.400" /></Ic>
        <Ic box="0 0 24 18" className="ml-[15px] h-[18px] w-[24px]"><path d="M6 4h16v12H6v-4M22 8h2v4h-2" stroke="#fff" strokeWidth="1.300" /><path d="M9 6h9v8H9z" fill="#fff" /><path d="M1 3h6v4H1zM2 0v3M6 0v3M4 7v4" stroke="#fff" /></Ic>
        <Ic box="0 0 20 20" className="ml-[16px] h-[20px] w-[20px]"><path d="M1 19A18 18 0 0 1 19 2M6 19A13 13 0 0 1 19 7M11 19a8 8 0 0 1 8-7" stroke="#ccc" strokeWidth="1.300" /><path d="M16 17h3v3h-3z" fill="#fff" /></Ic>
        <Ic box="0 0 22 20" className="ml-[13px] h-[20px] w-[22px]"><path d="M1 7h3l5-5v16l-5-5H1z" stroke="#fff" strokeWidth="1.200" /><path d="M12 7c1 2 1 4 0 6M15 5c2 3 2 7 0 10M18 2c3 5 3 11 0 16" stroke="#999" strokeWidth="1.200" /></Ic>
        <Fit className="ml-[17px] mt-[2px] w-[34px] text-[16px]">DEU</Fit>
        <div className="ml-[20px] flex w-[93px] flex-col items-center text-[16px] leading-[28px]"><Fit className="w-[43px]">16:58</Fit><Fit className="w-[93px]">23/10/2017</Fit></div>
        <Ic box="0 0 24 24" className="ml-[29px] h-6 w-6"><path d="M1 1h22v18h-8l-4 4-4-4H1z" stroke="#fff" strokeWidth="1.400" /></Ic>
        <div className="ml-[30px] mr-[7px] h-[60px] w-px bg-[#777]" />
      </div>
    </footer>
  );
}

export default function App() {
  return (
    <div className="relative flex h-[1080px] w-[1920px] flex-col overflow-hidden bg-[#f0f0f0] font-['Open_Sans','Noto_Sans',sans-serif] text-[15.5px] leading-[21px]">
      <TitleBar />
      <Ribbon />
      <div className="flex h-[563px] shrink-0">
        <main className="flex w-[1526px] shrink-0 flex-col pt-[2px]">
          <DocTabs />
          <div className="h-[11px] shrink-0 border-b border-[#aaa] bg-white" />
          <Drawing />
          <SheetTabs />
        </main>
        <Palette />
      </div>
      <CommandWindow />
      <StatusBar />
      <Taskbar />
      <PatternDialog />
    </div>
  );
}
